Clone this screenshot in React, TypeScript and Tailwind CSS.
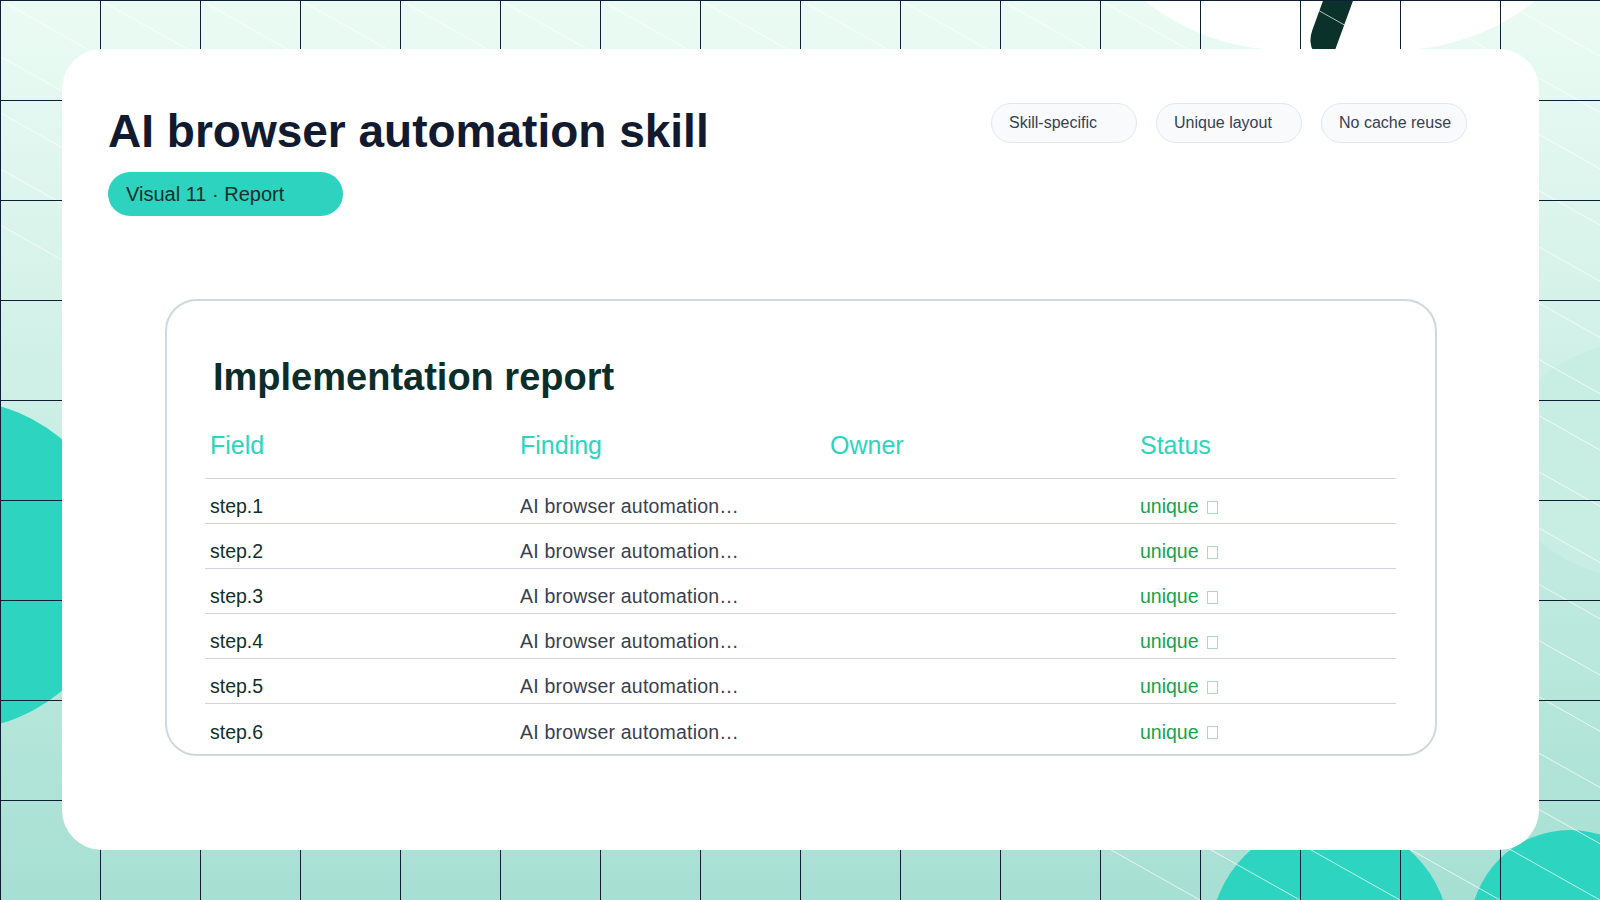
import React from "react";

const rows = [1, 2, 3, 4, 5, 6];
const tags = ["Skill-specific", "Unique layout", "No cache reuse"];

export default function App() {
  const vlines = Array.from({ length: 17 }, (_, i) => i * 100);
  const hlines = Array.from({ length: 10 }, (_, i) => i * 100);
  return (
    <div
      className="relative w-[1600px] h-[900px] overflow-hidden bg-gradient-to-b from-[#ebfbf4] to-[#a6e0d3]"
      style={{ fontFamily: '"Liberation Sans", Arial, sans-serif' }}
    >
      {/* decor */}
      <div className="absolute left-[-300px] top-[400px] w-[420px] h-[330px] rounded-full bg-[#2dd4bf]" />
      <div className="absolute left-[1210px] top-[820px] w-[240px] h-[240px] rounded-full bg-[#2dd4bf]" />
      <div className="absolute left-[1470px] top-[830px] w-[200px] h-[200px] rounded-full bg-[#2dd4bf]" />
      <div className="absolute left-[1500px] top-[340px] w-[300px] h-[240px] rounded-[50%] bg-[#c8eee3]" />
      <div className="absolute left-[1060px] top-[-400px] w-[560px] h-[450px] rounded-full bg-white" />
      <div className="absolute left-[1316px] top-[-20px] w-[30px] h-[80px] bg-[#0b312b] rounded-bl-[30px] skew-x-[-20deg]" />
      <svg className="absolute inset-0" width="1600" height="900">
        {Array.from({ length: 30 }, (_, i) => (
          <line key={i} x1={-400 + i * 100} y1={0} x2={-400 + i * 100 + 1600} y2={900} stroke="white" strokeOpacity="0.7" strokeWidth="1" />
        ))}
        {vlines.map((x) => (
          <line key={"v" + x} x1={x + 0.5} y1={0} x2={x + 0.5} y2={900} stroke="#0f1f33" strokeWidth="1" />
        ))}
        {hlines.map((y) => (
          <line key={"h" + y} x1={0} y1={y + 0.5} x2={1600} y2={y + 0.5} stroke="#0f1f33" strokeWidth="1" />
        ))}
      </svg>

      <div className="absolute left-[62px] top-[49px] w-[1477px] h-[801px] bg-white rounded-[40px] px-[46px] pt-[54px]">
        <div className="flex justify-between items-start">
          <div className="flex flex-col items-start">
            <h1 className="text-[46px] leading-[56px] font-bold text-[#111a2e]">AI browser automation skill</h1>
            <div className="mt-[13px] w-[235px] h-[44px] rounded-full bg-[#2ed3c0] flex items-center pl-[18px] text-[20px] text-[#10302b]">
              Visual 11 · Report
            </div>
          </div>
          <div className="flex gap-[19px] mr-[26px]">
            {tags.map((t) => (
              <div key={t} className="w-[146px] h-[40px] rounded-full border border-[#e2e8f0] bg-[#f8fafc] flex items-center pl-[17px] text-[16px] text-[#374151]">
                {t}
              </div>
            ))}
          </div>
        </div>

        <div className="mt-[83px] ml-[57px] w-[1272px] h-[457px] border-2 border-[#cfd8e0] rounded-[32px] pl-[38px] pt-[54px]">
          <h2 className="text-[38px] leading-[44px] font-bold text-[#0b2e2a] ml-[8px]">Implementation report</h2>
          <div className="w-[1191px] mt-[28px]">
            <div className="grid grid-cols-[310px_310px_310px_1fr] border-b border-[#d1d5db] h-[52px] text-[25px] text-[#2dd4bf]">
              <div className="pl-[5px]">Field</div>
              <div className="pl-[5px]">Finding</div>
              <div className="pl-[5px]">Owner</div>
              <div className="pl-[5px]">Status</div>
            </div>
            {rows.map((r, i) => (
              <div
                key={r}
                className={`grid grid-cols-[310px_310px_310px_1fr] h-[45px] items-center pt-[12px] text-[19.5px] ${i < 5 ? "border-b border-[#d1d5db]" : ""}`}
              >
                <div className="pl-[5px] text-[#10302b]">step.{r}</div>
                <div className="pl-[5px] text-[#374151] tracking-[0.2px]">AI browser automation…</div>
                <div />
                <div className="pl-[5px] text-[#16a34a] flex items-center gap-[8px]">
                  unique <span className="inline-block w-[11px] h-[13px] border border-[#a7dcbc]" />
                </div>
              </div>
            ))}
          </div>
        </div>
      </div>
    </div>
  );
}
